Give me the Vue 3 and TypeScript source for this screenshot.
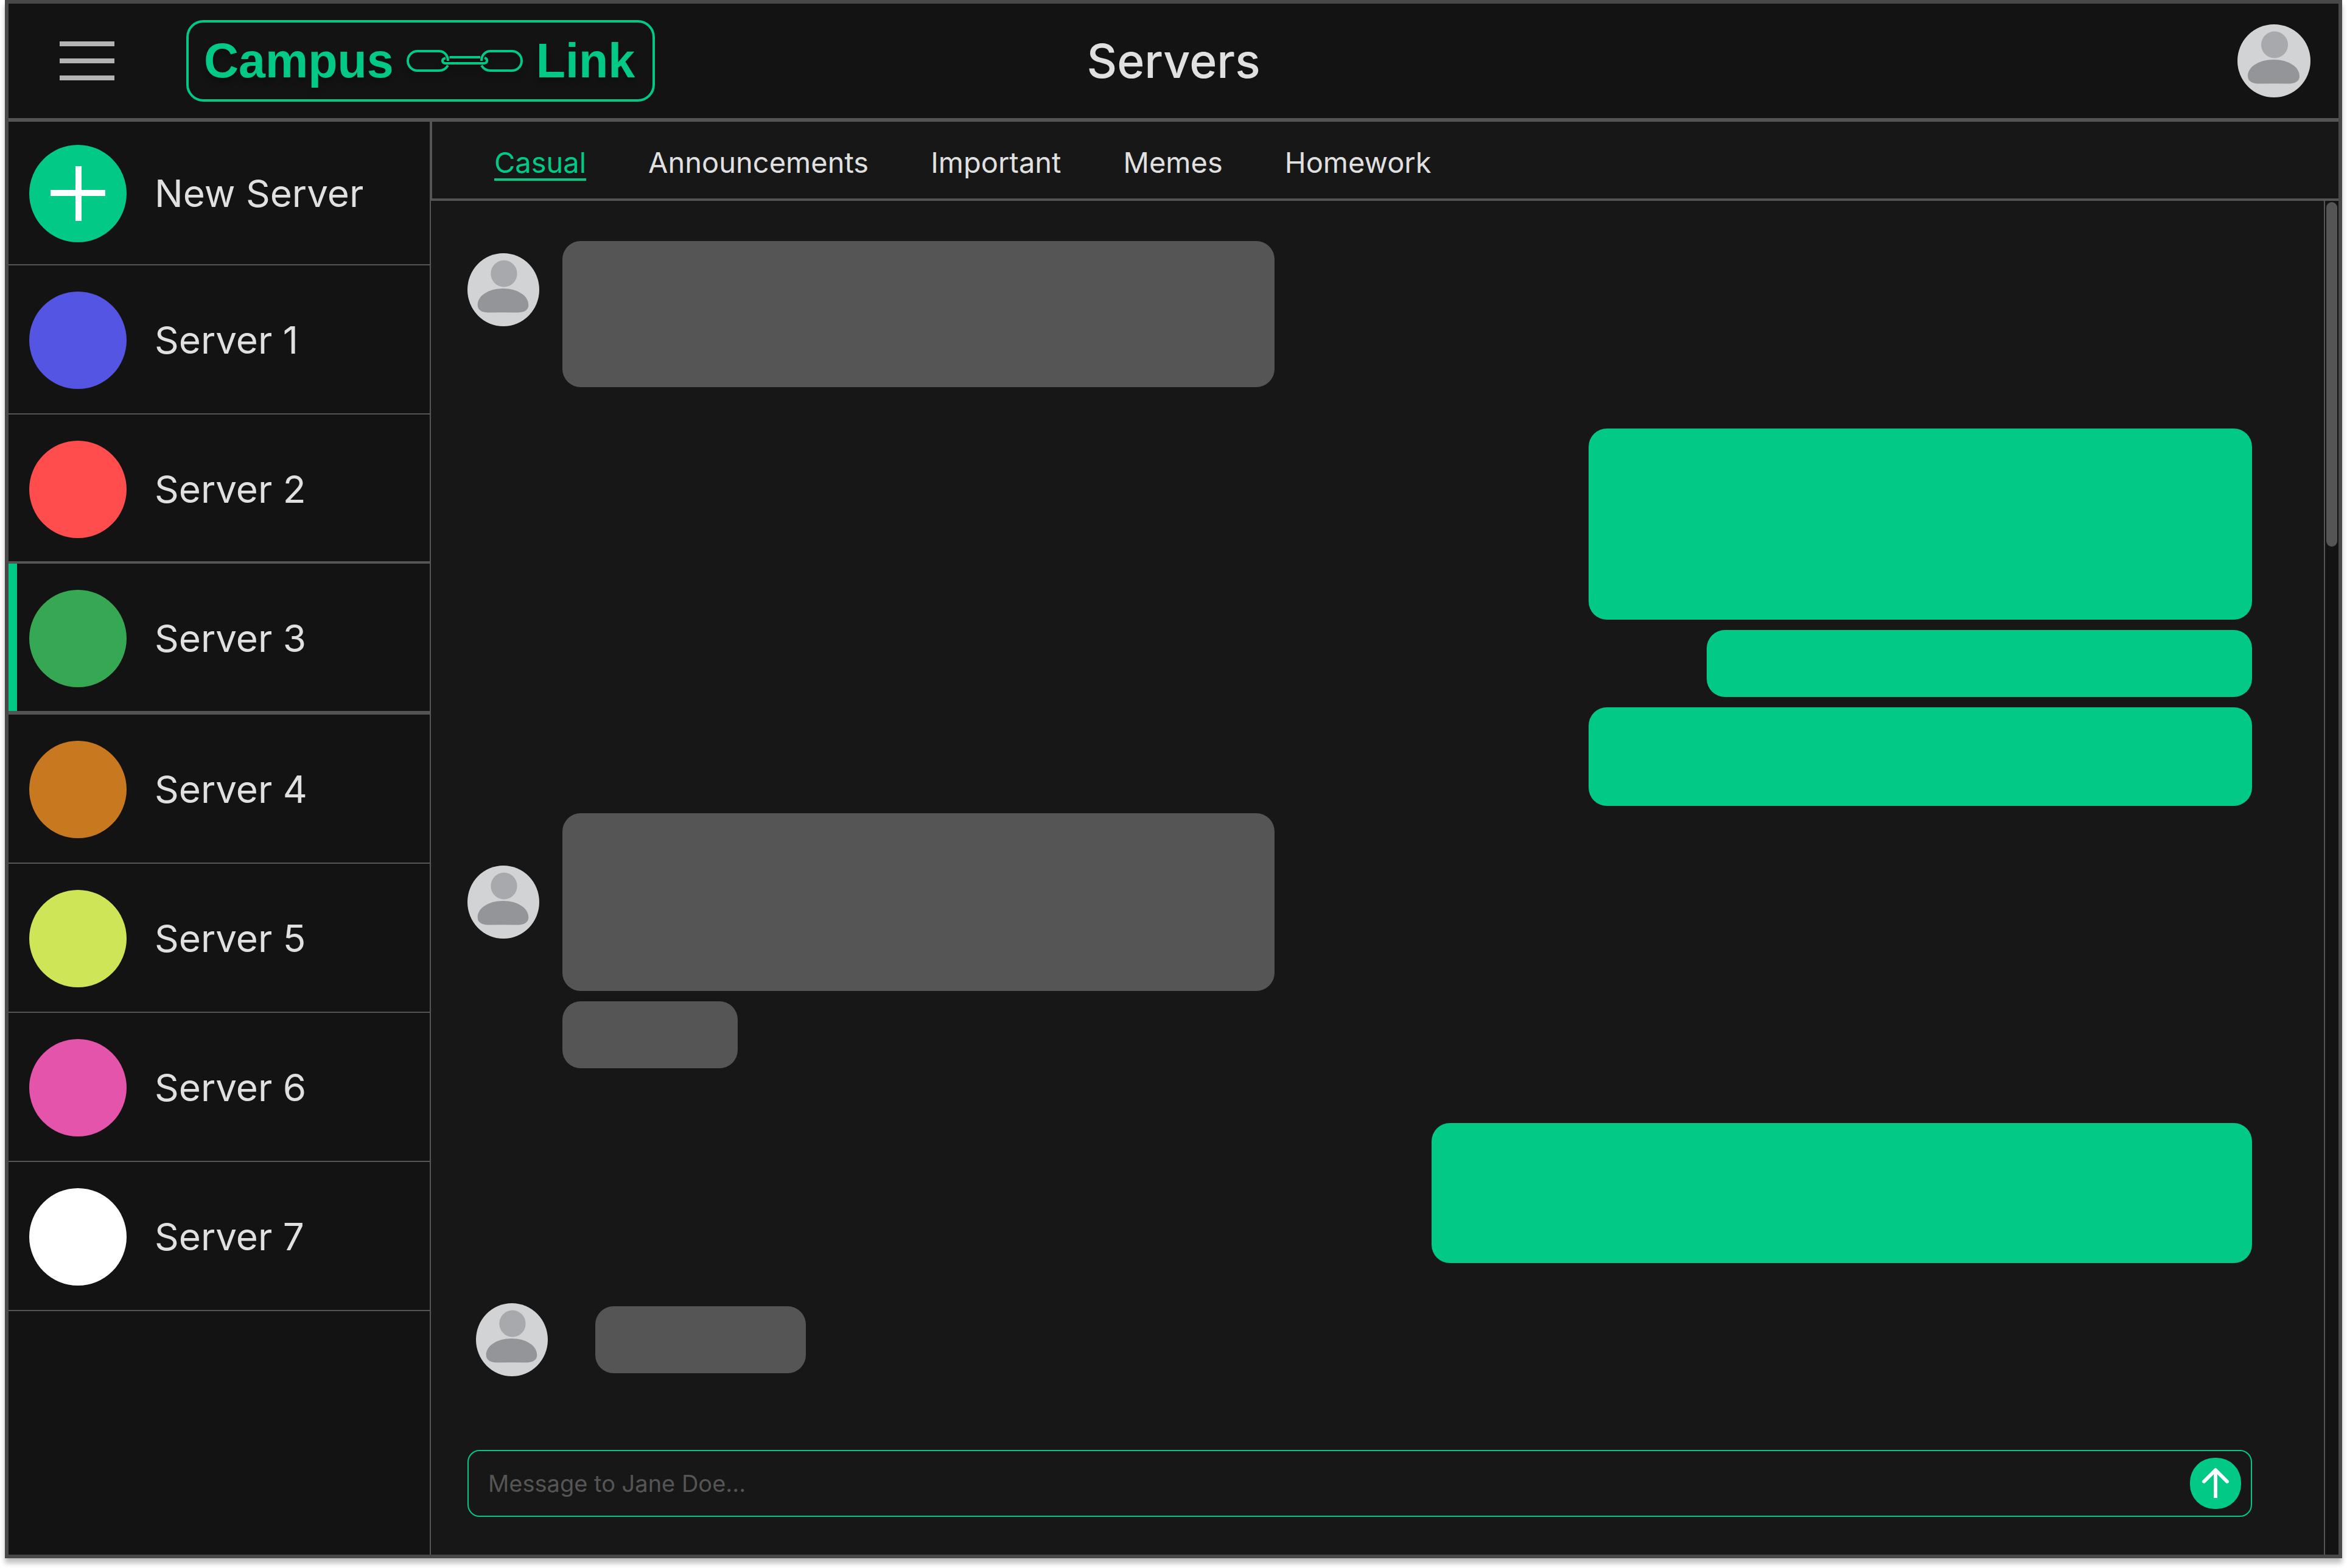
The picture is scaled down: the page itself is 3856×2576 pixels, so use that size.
<script setup lang="ts">
import { ref } from 'vue'

interface Server {
  name: string
  color: string
}

interface Bubble {
  width: number
  height: number
}

interface MessageGroup {
  side: 'theirs' | 'mine'
  variant?: 'opening' | 'stacked' | 'short'
  space: number
  bubbles: Bubble[]
}

const servers: Server[] = [
  { name: 'Server 1', color: '#5555e3' },
  { name: 'Server 2', color: '#ff4d4d' },
  { name: 'Server 3', color: '#36a853' },
  { name: 'Server 4', color: '#c87920' },
  { name: 'Server 5', color: '#cde556' },
  { name: 'Server 6', color: '#e554ab' },
  { name: 'Server 7', color: '#ffffff' },
]
const activeServer = ref('Server 3')

const channels = ['Casual', 'Announcements', 'Important', 'Memes', 'Homework']
const activeChannel = ref('Casual')

const groups: MessageGroup[] = [
  { side: 'theirs', variant: 'opening', space: 66, bubbles: [{ width: 1170, height: 240 }] },
  {
    side: 'mine',
    space: 68,
    bubbles: [
      { width: 1090, height: 314 },
      { width: 896, height: 110 },
      { width: 1090, height: 162 },
    ],
  },
  {
    side: 'theirs',
    variant: 'stacked',
    space: 12,
    bubbles: [
      { width: 1170, height: 292 },
      { width: 288, height: 110 },
    ],
  },
  { side: 'mine', space: 90, bubbles: [{ width: 1348, height: 230 }] },
  { side: 'theirs', variant: 'short', space: 66, bubbles: [{ width: 346, height: 110 }] },
]

const draft = ref('')
</script>

<template>
  <div class="window">
    <svg class="defs" width="0" height="0" aria-hidden="true">
      <symbol id="person" viewBox="0 0 120 120" preserveAspectRatio="none">
        <circle cx="60" cy="60" r="60" fill="#d1d3d4" />
        <circle cx="61" cy="33.500" r="22" fill="#a7a9ac" />
        <path
          d="M17 85C17 70 35 58 59.500 58S102 70 102 85C102 93 96 97 84 97.500Q59.500 97 35 97.500C23 97 17 93 17 85Z"
          fill="#939598"
        />
      </symbol>
    </svg>

    <header class="topbar">
      <div class="topbar-left">
        <button class="menu" type="button" aria-label="Menu">
          <span></span><span></span><span></span>
        </button>
        <a class="logo" href="#" aria-label="Campus Link">
          <span>Campus</span>
          <svg class="chain" viewBox="0 0 192 36" fill="none" stroke="#02c985" stroke-width="4">
            <path d="M68 25.500C65 30.500 60 34 53 34H18a16 16 0 0 1 0-32h35c9 0 15 7 15 16" />
            <path d="M123 25.500C126 30.500 131 34 138 34h35a16 16 0 0 0 0-32h-35c-9 0-15 7-15 16" />
            <path d="M70.500 12H121" />
            <path d="M64 13.500C56.500 15 58 22 64 22h63c6 0 7.500-7 1-9" />
          </svg>
          <span>Link</span>
        </a>
      </div>
      <h1 class="title">Servers</h1>
      <button class="profile" type="button" aria-label="Profile">
        <svg width="120" height="120"><use href="#person" /></svg>
      </button>
    </header>

    <div class="body">
      <nav class="sidebar" aria-label="Servers">
        <button class="server server-new" type="button">
          <span class="disc disc-new">
            <svg width="90" height="90" viewBox="0 0 90 90" stroke="#fff" stroke-width="10">
              <path d="M0 44H90M46 0V90" />
            </svg>
          </span>
          <span>New Server</span>
        </button>
        <button
          v-for="server in servers"
          :key="server.name"
          class="server"
          :class="{ active: server.name === activeServer }"
          type="button"
          @click="activeServer = server.name"
        >
          <span class="disc" :style="{ background: server.color }"></span>
          <span>{{ server.name }}</span>
        </button>
      </nav>

      <main class="main">
        <nav class="tabs" aria-label="Channels">
          <a
            v-for="channel in channels"
            :key="channel"
            class="tab"
            :class="{ active: channel === activeChannel }"
            href="#"
            @click.prevent="activeChannel = channel"
            >{{ channel }}</a
          >
        </nav>

        <div class="chat">
          <section class="conversation">
            <div
              v-for="(group, g) in groups"
              :key="g"
              class="group"
              :class="[group.side, group.variant]"
              :style="{ marginTop: group.space + 'px' }"
            >
              <svg v-if="group.side === 'theirs'" class="avatar"><use href="#person" /></svg>
              <div class="bubbles">
                <div
                  v-for="(bubble, b) in group.bubbles"
                  :key="b"
                  class="bubble"
                  :style="{ width: bubble.width + 'px', height: bubble.height + 'px' }"
                ></div>
              </div>
            </div>

            <form class="composer" @submit.prevent="draft = ''">
              <input
                v-model="draft"
                class="field"
                type="text"
                placeholder="Message to Jane Doe..."
                aria-label="Message to Jane Doe"
              />
              <button class="send" type="submit" aria-label="Send">
                <svg width="84" height="84" viewBox="0 0 84 84" fill="none" stroke="#fff" stroke-width="6">
                  <path d="M42 66V21" />
                  <path d="M23 39L42 20L61 39" stroke-linecap="round" stroke-linejoin="round" />
                </svg>
              </button>
            </form>
          </section>
          <div class="scrollbar"><div class="thumb"></div></div>
        </div>
      </main>
    </div>
  </div>
</template>

<style>
body {
  margin: 0;
  background: #fff;
}
</style>

<style scoped>
.window,
.window * {
  box-sizing: border-box;
}

.window {
  display: flex;
  flex-direction: column;
  min-height: calc(100vh - 16px);
  margin: 0 8px 16px;
  border: 6px solid #484848;
  background: #171717;
  box-shadow: 0 8px 8px rgba(0, 0, 0, 0.25);
  color: #e0e0e0;
  font-family: Inter, 'Liberation Sans', sans-serif;
}

.defs {
  position: absolute;
}

svg {
  display: block;
}

button {
  padding: 0;
  border: 0;
  background: none;
  color: inherit;
  font: inherit;
  cursor: pointer;
}

.topbar {
  display: grid;
  grid-template-columns: 1fr auto 1fr;
  align-items: center;
  height: 194px;
  padding: 0 46px;
  border-bottom: 6px solid #555;
  background: #131313;
}

.topbar-left {
  display: flex;
  align-items: center;
  gap: 118px;
  padding-left: 38px;
}

.menu {
  display: flex;
  flex-direction: column;
  gap: 20px;
  width: 90px;
}

.menu span {
  height: 8px;
  background: #b3b3b3;
}

.logo {
  display: flex;
  align-items: center;
  gap: 21px;
  height: 134px;
  padding: 0 29px 0 25px;
  border: 4px solid #02c985;
  border-radius: 28px;
  color: #02c985;
  font: bold 79px 'Liberation Sans', Arial, sans-serif;
  text-decoration: none;
  text-shadow: 0 8px 8px rgba(0, 0, 0, 0.25);
}

.chain {
  width: 192px;
  height: 36px;
  overflow: visible;
  filter: drop-shadow(0 8px 4px rgba(0, 0, 0, 0.25));
}

.title {
  margin: 0;
  font-size: 77px;
  font-weight: 500;
}

.profile {
  justify-self: end;
}

.body {
  display: flex;
  flex: 1;
}

.sidebar {
  flex: none;
  width: 692px;
  background: #131313;
}

.server {
  display: flex;
  align-items: flex-start;
  gap: 46px;
  width: 100%;
  height: 245px;
  padding: 43px 0 0 34px;
  border-bottom: 2px solid #555;
  font-size: 62px;
  font-weight: 400;
  line-height: 160px;
  text-align: left;
}

.server-new {
  height: 236px;
  padding-top: 38px;
}

.server:has(+ .active) {
  border-bottom-width: 4px;
}

.server.active {
  height: 248px;
  border-bottom-width: 6px;
  box-shadow: inset 14px 0 #02c985;
}

.disc {
  display: flex;
  align-items: center;
  justify-content: center;
  width: 160px;
  height: 160px;
  border-radius: 50%;
}

.disc-new {
  background: #02c985;
}

.main {
  display: flex;
  flex: 1;
  flex-direction: column;
}

.tabs {
  display: flex;
  align-items: center;
  gap: 102px;
  height: 130px;
  padding: 6px 0 0 102px;
  border-bottom: 4px solid #555;
  border-left: 4px solid #555;
}

.tab {
  color: inherit;
  font-size: 47px;
  text-decoration: none;
}

.tab.active {
  color: #02c985;
  text-decoration: underline 4px;
  text-underline-offset: 9px;
}

.chat {
  display: flex;
  flex: 1;
  border-left: 2px solid #555;
}

.conversation {
  display: flex;
  flex: 1;
  flex-direction: column;
  padding: 0 118px 62px 60px;
}

.group {
  display: flex;
  align-items: flex-start;
  gap: 38px;
}

.mine {
  justify-content: flex-end;
}

.bubbles {
  display: flex;
  flex-direction: column;
  gap: 17px;
}

.mine .bubbles {
  align-items: flex-end;
}

.bubble {
  border-radius: 30px;
  background: #555;
}

.mine .bubble {
  background: #02c985;
}

.avatar {
  flex: none;
  width: 118px;
  height: 120px;
}

.opening .avatar {
  margin-top: 20px;
}

.stacked .avatar {
  margin-top: 86px;
}

.short {
  align-items: center;
  gap: 78px;
  padding-left: 14px;
}

.composer {
  display: flex;
  align-items: center;
  height: 110px;
  margin-top: auto;
  padding: 0 16px 0 32px;
  border: 2px solid #02c985;
  border-radius: 20px;
}

.field {
  flex: 1;
  padding: 0;
  border: 0;
  outline: 0;
  background: none;
  color: #e0e0e0;
  font: 400 38px Inter, 'Liberation Sans', sans-serif;
}

.field::placeholder {
  color: #555;
  opacity: 1;
}

.send {
  border-radius: 40px;
  background: #02c985;
}

.scrollbar {
  width: 24px;
  padding: 2px;
  border-left: 2px solid #555;
  background: #131313;
}

.thumb {
  height: 566px;
  border-radius: 9px;
  background: #555;
}
</style>
